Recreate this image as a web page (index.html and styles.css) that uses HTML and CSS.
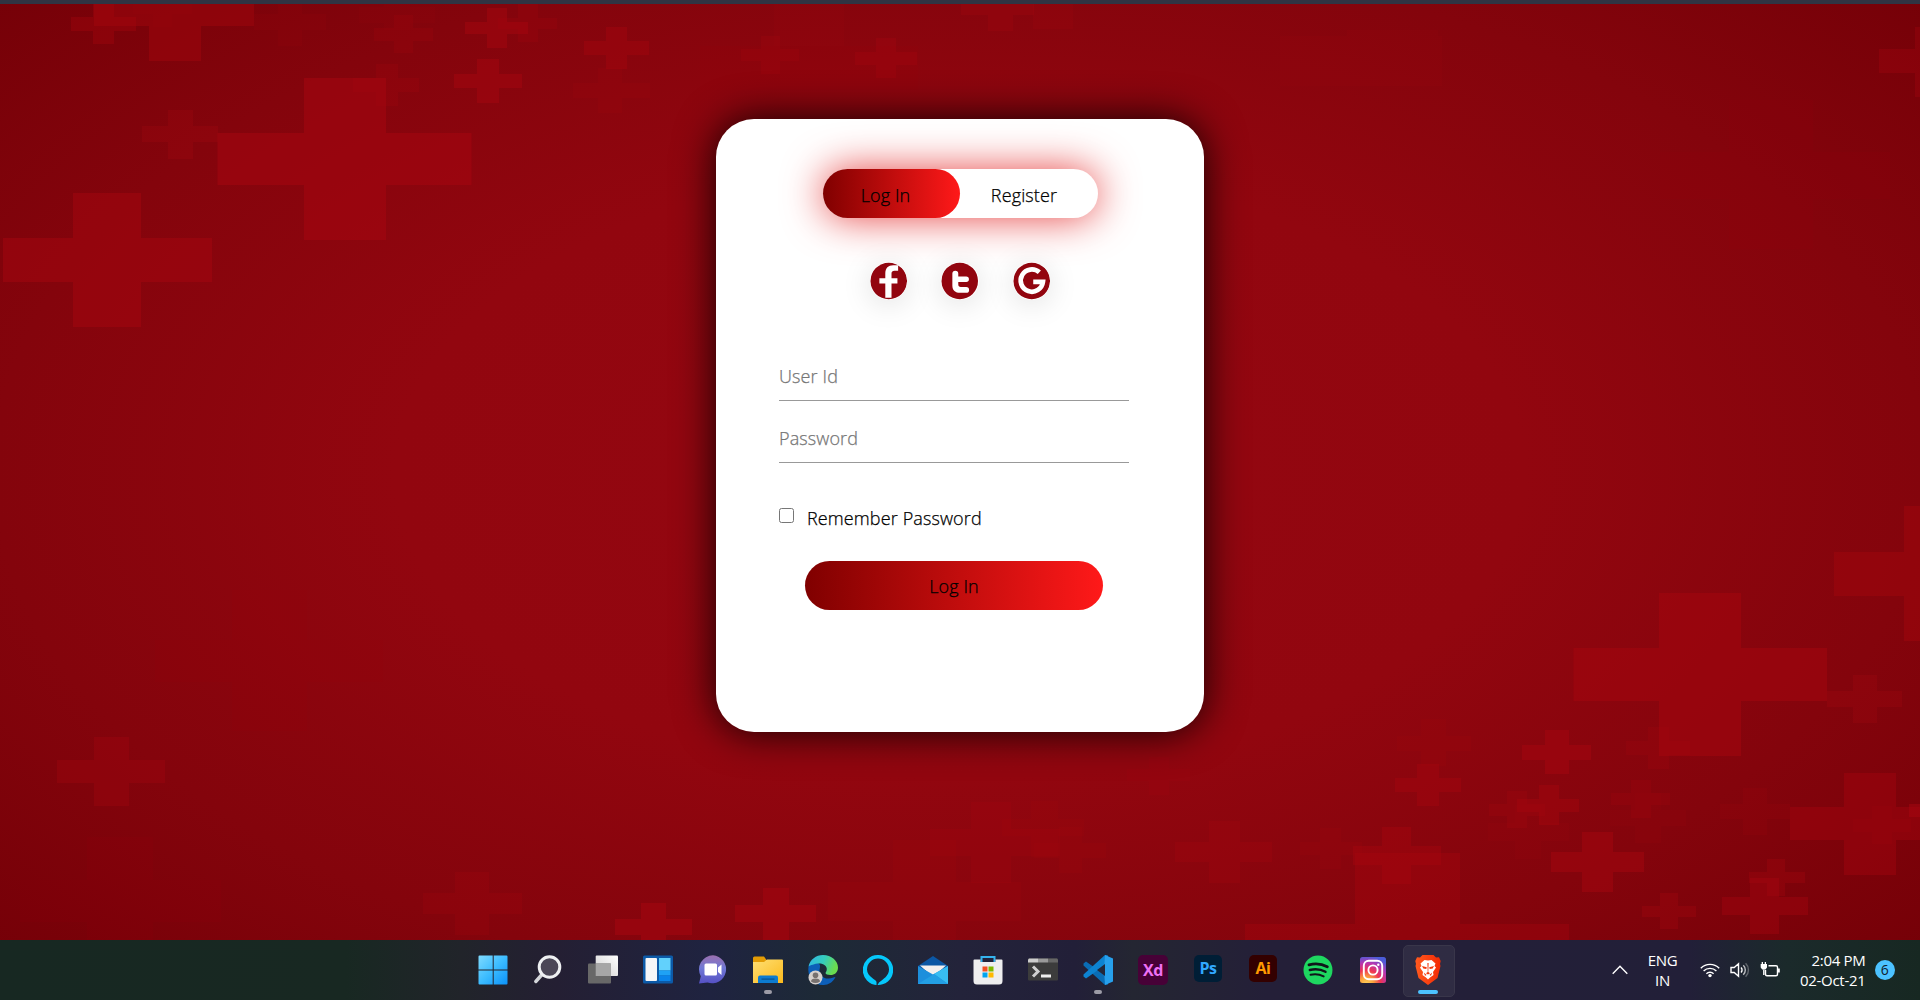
FILE: index.html
```html
<!DOCTYPE html>
<html lang="en">
<head>
<meta charset="utf-8">
<title>Log In</title>
<link rel="stylesheet" href="styles.css">
</head>
<body>
<div class="topline"></div>
<main class="page">
  <svg class="crosses" viewBox="0 4 1920 936" aria-hidden="true"></svg>
  <section class="card">
    <div class="toggle">
      <button class="toggle-btn active">Log In</button>
      <button class="toggle-btn">Register</button>
    </div>
    <div class="social">
      <svg viewBox="0 0 38 38"><circle cx="19" cy="19" r="18.5"/><path class="w" d="M15.500 36V21.500h-6v-5.200h6v-4.500c0-6 3-8.800 8-8.800h5v5.500h-3.700c-2 0-3 .9-3 3v4.800h6v5.200h-6V36z"/></svg>
      <svg viewBox="0 0 38 38"><circle cx="19" cy="19" r="18.500"/><path class="w" d="M11.500 11.500a3 3 0 0 1 6 0v3h8a2.800 2.800 0 0 1 0 5.600h-8v1.900c0 2.200.8 3 2.600 3h5.400a3 3 0 0 1 0 6h-6c-5 0-8-2.500-8-7.500z"/></svg>
      <svg viewBox="0 0 38 38"><circle cx="19" cy="19" r="18.500"/><path class="g" d="M26.700 10.200A11.300 11.300 0 1 0 30.300 20H20.500"/></svg>
    </div>
    <form class="form">
      <input class="field" type="text" placeholder="User Id">
      <input class="field" type="text" placeholder="Password">
      <label class="remember"><span class="box"></span><span>Remember Password</span></label>
      <button class="submit" type="button">Log In</button>
    </form>
  </section>
</main>
<footer class="taskbar">
  <div class="side"></div>
  <nav class="apps">
    <span class="app"><svg viewBox="0 0 30 30"><defs><linearGradient id="win" x1="0" y1="0" x2="30" y2="30" gradientUnits="userSpaceOnUse"><stop offset="0" stop-color="#82dcff"/><stop offset=".5" stop-color="#3cbcff"/><stop offset="1" stop-color="#0a90f8"/></linearGradient></defs><path fill="url(#win)" d="M1.500.500h13.200v13.900H.500v-12.900a1 1 0 0 1 1-1zM15.700.500h12.800a1 1 0 0 1 1 1v12.900H15.700zM.500 15.500h14.200v14H1.500a1 1 0 0 1-1-1zM15.700 15.500h13.800v13a1 1 0 0 1-1 1H15.700z"/></svg></span>
    <span class="app"><svg viewBox="0 0 30 30"><path d="M9 19.500L2.800 26.500" stroke="#d4d6da" stroke-width="3.400" stroke-linecap="round"/><circle cx="16.500" cy="12" r="10.300" fill="#4b4757" stroke="#eef0f2" stroke-width="3"/></svg></span>
    <span class="app"><svg viewBox="0 0 30 30"><defs><linearGradient id="tv" x1="1" x2="0" y2="1"><stop stop-color="#fff"/><stop offset="1" stop-color="#cfcfcf"/></linearGradient></defs><rect x="7.700" y=".5" width="22.300" height="20.500" rx="1" fill="url(#tv)"/><rect x="0" y="8.500" width="23" height="20" rx="1" fill="#686868"/><path fill="#a6a6a6" d="M7.700 8.500H23V21H7.700z"/></svg></span>
    <span class="app"><svg viewBox="0 0 30 30"><rect y=".5" width="30" height="28" rx="1.500" fill="#0c5aa8"/><rect x="2.500" y="3" width="11.500" height="23" rx="1" fill="#f5f6f8"/><path fill="#62d1fc" d="M16 3h11.500v12.500H16z"/><path fill="#1fa2f5" d="M16 15.500h11.500v5H16z"/><path fill="#0a84ea" d="M16 20.500h11.500V26H16z"/></svg></span>
    <span class="app"><svg viewBox="0 0 30 30"><defs><linearGradient id="chat" x1="0" y1="0" x2="0" y2="1"><stop stop-color="#9b6fae"/><stop offset=".45" stop-color="#7079d6"/><stop offset="1" stop-color="#5550c4"/></linearGradient></defs><path fill="url(#chat)" d="M15 .300a14 14 0 1 1-5.500 27.200L1 28.500l1.800-7.300A14 14 0 0 1 15 .300z"/><rect x="6.500" y="8.500" width="12.500" height="12" rx="1.500" fill="#fff"/><path fill="#fff" d="M20 12.500l3.500-3v10.500l-3.500-3z"/></svg></span>
    <span class="app run"><svg viewBox="0 0 30 30"><defs><linearGradient id="fold" y2="1" x2="1"><stop stop-color="#ffdf73"/><stop offset="1" stop-color="#fbba1d"/></linearGradient></defs><path fill="#e39c05" d="M0 3a1.500 1.500 0 0 1 1.500-1.500h9.500L13.500 5H22v6H0z"/><path fill="url(#fold)" d="M0 7h11l3-2.500h15a1 1 0 0 1 1 1V28H0z"/><path fill="#0c7bd0" d="M5 28v-5.500A2 2 0 0 1 7 20.500h16a2 2 0 0 1 2 2V28z"/><path fill="#07518e" d="M8.500 23.500h13v1.200h-13z"/></svg></span>
    <span class="app"><svg viewBox="0 0 30 30"><defs><linearGradient id="e1" y2=".3"><stop stop-color="#2fb5e8"/><stop offset=".55" stop-color="#35cdbb"/><stop offset="1" stop-color="#6bdc4e"/></linearGradient></defs><path fill="#0d5fb8" d="M.5 12C1.500 7 6 6 10 8c3 1.500 2 4 1.500 7 0 6 5 9 9 8.500 3.500-.3 5-1.500 7-1.500-3 6-8 8.200-13 8C6 29.500-1 22 .500 12z"/><path fill="url(#e1)" d="M.5 11.500C2 4.500 8 0 15 0c8.500 0 15 6 15 12.500 0 5-3.500 7.500-7.500 7.500-3 0-5-1-5-2 0-.8 1.300-1.500 1.300-4 0-3-3-5.500-7.500-5.500-5 0-9 2-10.800 3z"/><circle cx="7.500" cy="22.500" r="7" fill="#d5d0cd"/><circle cx="7.500" cy="20.200" r="2.800" fill="#77716f"/><path fill="#77716f" d="M3 26.500q0-3 4.500-3t4.500 3q-4.500 3-9 0z"/></svg></span>
    <span class="app"><svg viewBox="0 0 30 30"><path fill="#05c8fb" fill-rule="evenodd" d="M15 0a15 15 0 1 1-1.500 29.900v-3C13.500 24.500 4 22 4 14.500a11 11 0 1 1 22 0C26 21 20 24 16 27.500L14.500 30A15 15 0 0 1 15 0z"/></svg></span>
    <span class="app"><svg viewBox="0 0 30 30"><path fill="#0b57a4" d="M0 11L15 1l15 10v4H0z"/><path fill="#f3f0ee" d="M2 10.500h26L15 22z"/><path fill="#1d8fdc" d="M0 11l15 8.500L30 11v18H0z"/><path fill="#38bdf2" d="M30 11v18L16 19z"/><path fill="#239fe4" d="M0 29l16-10 14 10z"/></svg></span>
    <span class="app"><svg viewBox="0 0 30 30"><path d="M8.500 7V2h13v5" fill="none" stroke="#35b3ee" stroke-width="2"/><path fill="#eeeeef" d="M1.500 4.500H7.500V7h15V4.500h6a1 1 0 0 1 1 1V26a3.500 3.500 0 0 1-3.500 3.500H4A3.500 3.500 0 0 1 .500 26V5.500a1 1 0 0 1 1-1z"/><path fill="#f25022" d="M9.500 11.500h5v5h-5z"/><path fill="#7fba00" d="M15.500 11.500h5v5h-5z"/><path fill="#00a4ef" d="M9.500 17.500h5v5h-5z"/><path fill="#ffb900" d="M15.500 17.500h5v5h-5z"/></svg></span>
    <span class="app"><svg viewBox="0 0 30 30"><rect y="3.500" width="30" height="22" rx="1" fill="#3c3c3c"/><path fill="#ccc" d="M1 3.500h9v4H0v-3z"/><path fill="#999" d="M10 3.500h10v4H10z"/><path fill="#666" d="M20 3.500h9l1 1v3H20z"/><path d="M5 11.500l5 5-5 5" fill="none" stroke="#d0d0d0" stroke-width="3"/><path fill="#eee" d="M13 19.500h10v3H13z"/></svg></span>
    <span class="app run"><svg viewBox="0 0 30 30"><path fill="#0a6db5" d="M3 6.500L25 22v7.500l-3 .5L.500 10.500V8.500z"/><path fill="#0d83d1" d="M3 23.500L25 8V.500L22 0 .500 19.500v2z"/><path fill="#27a0ec" d="M22 0l8 3.500v23L22 30l-.5-8V8z"/><path fill="#23283a" d="M22 9v12l-8-6z"/></svg></span>
    <span class="app"><b class="tile xd">Xd</b></span>
    <span class="app"><b class="tile ps">Ps</b></span>
    <span class="app"><b class="tile ai">Ai</b></span>
    <span class="app"><svg viewBox="0 0 30 30"><circle cx="15" cy="15" r="14.500" fill="#1ed760"/><g fill="none" stroke="#10151a" stroke-linecap="round"><path d="M6 9.800q10-2.600 18.300 2" stroke-width="2.800"/><path d="M6.800 15q8.500-2.200 15.700 1.800" stroke-width="2.400"/><path d="M7.500 19.800q7-1.600 13.200 1.600" stroke-width="1.900"/></g></svg></span>
    <span class="app"><svg viewBox="0 0 30 30"><defs><radialGradient id="ig" cx=".25" cy="1.050" r="1.100"><stop stop-color="#ffd45c"/><stop offset=".25" stop-color="#fba23c"/><stop offset=".5" stop-color="#ee3454"/><stop offset=".75" stop-color="#b836b0"/><stop offset="1" stop-color="#4c5cd8"/></radialGradient></defs><rect x="2" y="2" width="26" height="26" rx="2.500" fill="url(#ig)"/><g fill="none" stroke="#fff" stroke-width="1.900"><rect x="5.800" y="5.800" width="18.400" height="18.400" rx="5"/><circle cx="15" cy="15" r="4.600"/></g><circle cx="20.300" cy="9.700" r="1.200" fill="#fff"/></svg></span>
    <span class="app current"><svg viewBox="0 0 30 30"><defs><linearGradient id="br"><stop stop-color="#ff5a1e"/><stop offset="1" stop-color="#f32a05"/></linearGradient></defs><path fill="url(#br)" d="M9.500 0h11L23 2.500l3-.3 1.700 3.800L27 9l.5 2-3 12L15 30l-9.500-7-3-12L3 9l-.7-3L4 2.200l3 .3z"/><path fill="#fff" d="M15 5.500l3.500-.5 4 3.500-1 2.500 1.500 1.500-3 4.500.5 3-3.500 2.500-2 2-2-2-3.500-2.500.5-3-3-4.500 1.500-1.500-1-2.500 4-3.500z"/><path fill="#f2380b" d="M9 11l4.800 1.300-.5 1.600-3-.5zM21 11l-4.800 1.300.5 1.600 3-.5zM14.400 8h1.200l-.3 9 1.700 1.300-2 1.200-2-1.200 1.700-1.300zM10.800 17.500l2.800 2.500-1.600.8zM19.200 17.500L16.400 20l1.600.8z"/></svg></span>
  </nav>
  <div class="side tray">
    <svg class="chev" viewBox="0 0 16 10"><path d="M.7 8.800L8 1.300l7.300 7.500"/></svg>
    <div class="lang"><span>ENG</span><span>IN</span></div>
    <svg class="wifi" viewBox="0 0 20 16"><path d="M.8 6.200a13 13 0 0 1 18.400 0M3.600 9a9.100 9.100 0 0 1 12.800 0M6.400 11.700a5.100 5.100 0 0 1 7.200 0"/><circle cx="10" cy="13.600" r="1.700"/></svg>
    <svg class="vol" viewBox="0 0 20 16"><path d="M1 5.500h3.200L8.500 1.700v12.600L4.200 10.500H1zM11 5.500a3.500 3.500 0 0 1 0 5"/><path opacity=".7" d="M13.300 3.300a6.500 6.500 0 0 1 0 9.400"/><path opacity=".3" d="M15.600 1.200a9.500 9.500 0 0 1 0 13.600"/></svg>
    <svg class="bat" viewBox="0 0 20 16"><path d="M8.500 3.800H16q1.500 0 1.500 1.500v7q0 1.500-1.500 1.500H7q-1.500 0-1.500-1.500V8"/><path class="solid" d="M1.700 0h1.300v2h1.700V0H6v2h1v3.500L5.500 7.500H2.200L.700 5.500V2h1zM17.500 6.500h2.300v4h-2.300z"/><path d="M3.800 7.500v5.500"/></svg>
    <div class="clock"><span>2:04 PM</span><span>02-Oct-21</span></div>
    <span class="badge">6</span>
  </div>
</footer>
<script src="crosses.js"></script>
</body>
</html>
```
FILE: styles.css
```css
* { box-sizing: border-box; }
body {
  margin: 0;
  height: 1000px;
  display: flex;
  flex-direction: column;
  overflow: hidden;
  font-family: "Open Sans", "Noto Sans", sans-serif;
}
button, input { font: inherit; color: inherit; border: 0; padding: 0; background: none; letter-spacing: inherit; }
.topline { height: 4px; background: #303443; }
.page {
  position: relative;
  height: 936px;
  display: flex;
  flex-direction: column;
  align-items: center;
  padding-top: 115px;
  background: radial-gradient(ellipse 1340px 730px at center, #940711 0, #92060f 42%, #84040c 72%, #740007 100%);
}
.crosses { position: absolute; inset: 0; width: 1920px; height: 936px; }
.crosses path { fill: #a8060f; }
.card {
  position: relative;
  width: 488px;
  height: 613px;
  padding-top: 50px;
  border-radius: 38px;
  background: #fff;
  box-shadow: 0 0 40px rgba(0, 0, 0, .9);
  font-size: 18px;
  font-weight: 300;
  letter-spacing: .12px;
  -webkit-text-stroke: .25px;
  color: #000;
}
.toggle {
  width: 275px;
  height: 49px;
  margin: 0 0 0 107px;
  display: flex;
  border-radius: 25px;
  box-shadow: 0 0 40px #e64343;
}
.toggle-btn { width: 137px; height: 49px; padding: 2px 9px 0 0; border-radius: 25px; }
.toggle-btn.active { padding: 2px 12px 0 0; background: linear-gradient(to right, #800000, #ff1919); }
.social { display: flex; justify-content: center; gap: 34px; margin-top: 43.500px; }
.social svg { width: 37.500px; height: 38px; border-radius: 50%; box-shadow: 0 4px 30px rgba(0, 0, 0, .13); fill: #92050f; }
.social .w { fill: #fff; }
.social .g { fill: none; stroke: #fff; stroke-width: 4.800; }
.form { width: 350px; margin: 49.500px 0 0 63px; display: flex; flex-direction: column; }
.field { height: 52px; padding-top: 2px; border-bottom: 1px solid #999; outline: none; }
.field + .field { height: 62px; padding-top: 13px; }
.field::placeholder { color: #757575; opacity: 1; }
.remember { display: flex; gap: 13px; margin-top: 44px; height: 30px; line-height: 22px; }
.box { width: 15px; height: 15px; margin-top: 1px; border: 1px solid #767676; border-radius: 2.500px; }
.submit { width: 298px; height: 49px; margin: 24px 0 0 26px; border-radius: 25px; background: linear-gradient(to right, #800000, #ff1919); }
.taskbar {
  height: 60px;
  display: flex;
  color: #fff;
  background: linear-gradient(to right, #172822 0, #182822 18%, #21242a 24%, #241f33 29%, #1f2340 37%, #1d2a36 43%, #23233a 50%, #221f38 56%, #242632 59%, #241f38 66%, #221f38 88%, #1b2a2b 93%, #172822 100%);
}
.side { width: 466px; }
.apps { display: flex; width: 990px; margin-left: -.500px; }
.app { position: relative; width: 55px; height: 60px; display: flex; align-items: center; justify-content: center; }
.app svg { width: 30px; height: 30px; }
.run::after, .current::after {
  content: "";
  position: absolute;
  bottom: 6px;
  left: 50%;
  width: 8px;
  height: 4px;
  margin-left: -4px;
  border-radius: 2px;
  background: #9c9ba6;
}
.current::after { width: 20px; margin-left: -10px; background: #4cc2ff; }
.current::before {
  content: "";
  position: absolute;
  left: 2px;
  top: 5px;
  width: 50px;
  height: 50px;
  border: 1px solid #39364a;
  border-radius: 5px;
  background: rgba(255, 255, 255, .06);
}
.current svg { position: relative; }
.tile { width: 28px; height: 27px; border-radius: 5px; font: 700 16px/26px "Open Sans", sans-serif; text-align: center; margin-bottom: 3px; letter-spacing: -.5px; }
.xd { width: 30px; height: 30px; margin: 0; line-height: 30px; background: #470137; color: #ef70f5; }
.ps { background: #001e36; color: #31a8ff; }
.ai { background: #330000; color: #ff9a00; }
.tray { width: 464px; display: flex; align-items: center; font-size: 15px; line-height: 20px; letter-spacing: -.3px; }
.tray svg { fill: none; stroke: #fff; stroke-width: 1.400; }
.chev { width: 16px; height: 10px; margin-left: 156px; }
.lang, .clock { display: flex; flex-direction: column; padding-bottom: 1px; }
.lang { width: 30px; margin-left: 20px; align-items: center; }
.wifi, .vol, .bat { width: 20px; height: 16px; }
.wifi { margin-left: 22px; }
.wifi circle, .tray .solid { fill: #fff; stroke: none; }
.vol { margin-left: 10px; }
.bat { margin-left: 10px; }
.clock { width: 86px; align-items: flex-end; }
.badge { width: 20px; height: 20px; margin-left: 9px; border-radius: 50%; background: #4cc2ff; color: #10202c; font-size: 14px; text-align: center; }
```
FILE: crosses.js
```js
// Each cross: horizontal bar x1, x2, y1, y2, vertical bar x1, x2, y1, y2, opacity.
const crosses = [
  [217.5, 471.5, 133, 185, 304, 386, 78, 240, .5],
  [3, 212, 238, 282, 73, 141, 193, 327, .45],
  [142, 218, 126, 142, 168, 193, 110, 159, .25],
  [454, 522, 74, 88, 477, 499, 59, 103, .45],
  [353, 419, 78, 92, 376, 398, 64, 106, .2],
  [465, 528, 22, 34, 487, 507, 8, 48, .45],
  [498, 557, 18, 29, 518, 538, 4, 42, .22],
  [584, 649, 41, 55, 606, 627, 27, 69, .4],
  [573, 650, 83, 98, 598, 622, 68, 113, .15],
  [71, 136, 17, 31, 93, 114, 4, 44, .35],
  [94, 254, 4, 26, 149, 201, 4, 61, .42],
  [133, 192, 4, 14, 153, 172, 4, 27, .12],
  [254, 326, 14, 30, 278, 302, 4, 46, .12],
  [374, 433, 28, 41, 394, 413, 15, 53, .2],
  [359, 435, 7, 23, 384, 410, 4, 30, .1],
  [1660, 1890, 152, 199, 1729, 1813, 100, 249, .08],
  [1879, 1920, 49, 73, 1915, 1920, 27, 97, .3],
  [741, 799, 49, 61, 761, 780, 36, 74, .25],
  [855, 917, 52, 65, 876, 896, 38, 78, .3],
  [961, 1034, 4, 15, 988, 1013, 4, 31, .25],
  [1033, 1073, 4, 29, 1033, 1073, 4, 29, .18],
  [774, 844, 4, 46, 805, 838, 4, 12, .12],
  [700, 918, 46, 90, 700, 918, 46, 90, .08],
  [1280, 1442, 36, 86, 1347, 1438, 30, 36, .1],
  [1834, 1920, 552, 596, 1904, 1920, 506, 641, .42],
  [1573.5, 1827, 648, 701, 1659, 1741, 593, 756, .48],
  [1827, 1902, 691, 707, 1853, 1877, 675, 723, .25],
  [1522, 1591, 745, 760, 1545, 1569, 730, 774, .45],
  [1626, 1690, 741, 755, 1648, 1669, 727, 769, .2],
  [1395, 1461, 778, 792, 1417, 1439, 764, 806, .4],
  [1397, 1471, 736, 751, 1421, 1446, 719, 766, .15],
  [1517, 1579, 799, 812, 1539, 1559, 785, 825, .42],
  [1489, 1545, 804, 816, 1507, 1527, 791, 828, .25],
  [1488, 1569, 823, 841, 1515, 1541, 805, 859, .12],
  [1611, 1670, 793, 805, 1631, 1651, 780, 818, .22],
  [1610, 1686, 810, 826, 1635, 1661, 793, 843, .12],
  [1720, 1790, 804, 819, 1743, 1767, 788, 835, .15],
  [1790, 1949, 807, 840, 1844, 1896, 773, 875, .4],
  [1853, 1911, 819, 832, 1872, 1892, 806, 844, .15],
  [1909, 1920, 804, 817, 1909, 1920, 804, 817, .5],
  [1551, 1644, 852, 872, 1582, 1613, 832, 892, .45],
  [1353, 1441, 846, 865, 1382, 1411, 827, 884, .4],
  [1245, 1569, 924, 940, 1355, 1460, 853, 940, .35],
  [1642, 1696, 906, 917, 1660, 1678, 893, 929, .3],
  [1722, 1808, 897, 915, 1750, 1779, 878, 934, .38],
  [1749, 1805, 872, 883, 1767, 1785, 859, 896, .3],
  [1300, 1362, 842, 855, 1320, 1341, 828, 869, .15],
  [735, 816, 905, 922, 763, 789, 888, 940, .45],
  [615, 692, 919, 935, 641, 666, 903, 940, .5],
  [930, 1060, 829, 856, 971, 1011, 802, 883, .2],
  [1002, 1084, 819, 836, 1031, 1058, 801, 857, .15],
  [1034, 1106, 843, 858, 1059, 1082, 827, 873, .15],
  [1175, 1272, 842, 862, 1209, 1240, 821, 883, .25],
  [1127, 1190, 769, 781, 1149, 1169, 757, 795, .18],
  [828, 1021, 882, 921, 893, 956, 840, 940, .15],
  [57, 165, 760, 783, 94, 129, 737, 806, .3],
  [20, 221, 880, 922, 87, 153, 837, 940, .08],
  [423, 522, 893, 914, 455, 489, 872, 935, .2],
  [155, 383, 640, 682, 232, 307, 590, 731, .08]
];
document.querySelector(".crosses").innerHTML = crosses.map(([a, b, c, d, e, f, g, h, o]) =>
  `<path opacity="${o}" d="M${a} ${c}H${b}V${d}H${a}zM${e} ${g}H${f}V${h}H${e}z"/>`).join("");
```
